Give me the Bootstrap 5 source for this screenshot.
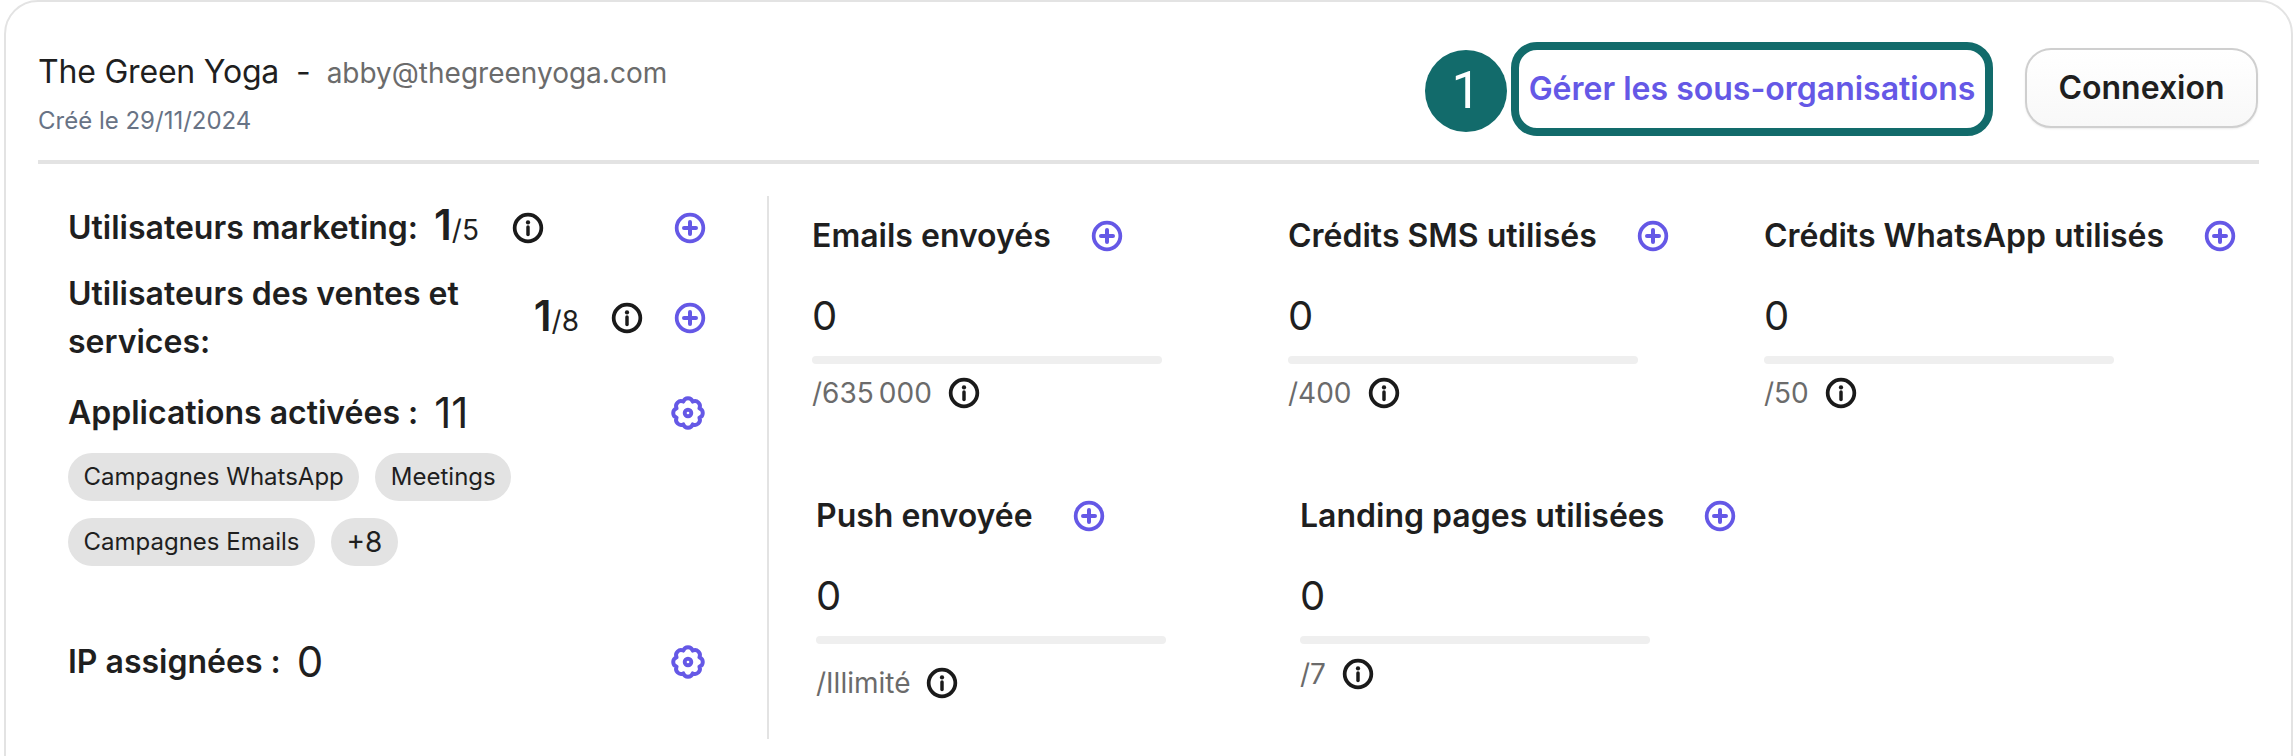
<!DOCTYPE html>
<html lang="fr">

<head>
    <meta charset="UTF-8">
    <meta name="viewport" content="width=device-width, initial-scale=1.0">
    <title>Sous-organisation</title>
    <link href="https://cdn.jsdelivr.net/npm/bootstrap@5.3.0/dist/css/bootstrap.min.css" rel="stylesheet">
    <style>
        html, body {
            height: 756px;
            overflow: hidden;
        }

        body {
            background: #fff;
            color: #1f1f1f;
            font-family: Inter, "Liberation Sans", sans-serif;
        }

        .org-card {
            height: 800px;
            margin: 0 3px 0 4px;
            padding: 0 32px 0 32px;
            border: 2px solid #e3e3e3;
            border-radius: 34px;
        }

        .org-head {
            height: 162px;
            padding-top: 40px;
            border-bottom: 4px solid #e3e3e3;
        }

        .org-name {
            margin-top: 7px;
            font-size: 32px;
            line-height: 45px;
            letter-spacing: -.2px;
        }

        .org-mail {
            margin-left: 16px;
            color: #6b6b6b;
            font-size: 28px;
            letter-spacing: 0;
        }

        .org-dash {
            margin-left: 17px;
        }

        .org-date {
            margin-top: 9px;
            color: #687385;
            font-size: 24px;
            line-height: 32px;
        }

        .step-dot {
            width: 82px;
            height: 82px;
            margin-top: 8px;
            margin-right: 4px;
            color: #fff;
            background: #126b6b;
            font-family: Roboto, "Liberation Sans", sans-serif;
            font-size: 52px;
        }

        .btn-sub {
            width: 482px;
            height: 94px;
            padding: 0;
            color: #6558e6;
            background: #fff;
            border: 8px solid #126b6b;
            border-radius: 26px;
            font-size: 32px;
            font-weight: 600;
            white-space: nowrap;
        }

        .btn-login {
            width: 233px;
            height: 80px;
            margin-top: 6px;
            margin-left: 32px;
            margin-right: 1px;
            padding: 0;
            color: #1f1f1f;
            background: linear-gradient(#fff, #f8f8f8);
            border: 2px solid #cfcfcf;
            border-radius: 26px;
            box-shadow: 0 1px 2px rgba(0, 0, 0, .08);
            font-size: 32px;
            font-weight: 600;
        }

        .org-body {
            padding-top: 32px;
        }

        .side-col {
            flex: 0 0 731px;
            height: 543px;
            padding: 5px 61px 0 30px;
            border-right: 2px solid #e3e3e3;
        }

        .side-row {
            min-height: 48px;
        }

        .apps-row {
            margin-top: 23px;
        }

        .label-txt {
            font-size: 32px;
            font-weight: 600;
            line-height: 48px;
        }

        .count-big {
            font-size: 42px;
            font-weight: 600;
            line-height: 48px;
        }

        .count-thin {
            font-size: 42px;
            line-height: 48px;
        }

        .count-of {
            font-size: 28px;
        }

        .info-far {
            margin-left: 33px;
        }

        .info-near {
            margin-left: 32px;
        }

        .plus-near {
            margin-left: 31px;
        }

        .chip-list {
            gap: 17px 16px;
            margin-top: 16px;
            width: 460px;
        }

        .chip-item {
            padding: 0 15.5px;
            color: #1f1f1f;
            background: #e3e3e3;
            font-size: 24px;
            font-weight: 400;
            line-height: 48px;
        }

        .chip-more {
            font-size: 28px;
        }

        .ip-row {
            margin-top: 72px;
        }

        .tile-list {
            padding: 20px 0 0 43px;
        }

        .tile-item {
            flex: 0 0 476px;
        }

        .tile-list-two {
            margin-top: 86px;
            margin-left: 4px;
        }

        .tile-list-two .tile-item {
            flex-basis: 484px;
        }

        .tile-title {
            gap: 40px;
            font-size: 32px;
            font-weight: 600;
            line-height: 40px;
            white-space: nowrap;
        }

        .tile-val {
            margin-top: 38px;
            font-size: 40px;
            line-height: 44px;
        }

        .tile-bar {
            width: 350px;
            height: 8px;
            margin-top: 18px;
            background: #efefef;
            border-radius: 4px;
        }

        .tile-limit {
            gap: 16px;
            margin-top: 12px;
            color: #6b6b6b;
            font-size: 28px;
            line-height: 34px;
        }

        .tile-list-two .tile-limit {
            margin-top: 13px;
        }

        .tile-list-two .tile-limit-low {
            margin-top: 22px;
        }

        .ico {
            flex: none;
            width: 32px;
            height: 32px;
        }

        .ico-gear {
            width: 36px;
            height: 36px;
        }

        .ico-dark {
            color: #1a1a1a;
        }

        .ico-brand {
            color: #6558e6;
        }
    </style>
</head>

<body>
    <svg width="0" height="0" class="d-block">
        <symbol id="i-info" viewBox="0 0 24 24">
            <circle cx="12" cy="12" r="10" fill="none" stroke="currentColor" stroke-width="2.8" />
            <circle cx="12" cy="7.8" r="1.6" fill="currentColor" />
            <path d="M12 11.2v5.6" stroke="currentColor" stroke-width="2.6" stroke-linecap="round" />
        </symbol>
        <symbol id="i-plus" viewBox="0 0 24 24">
            <circle cx="12" cy="12" r="10" fill="none" stroke="currentColor" stroke-width="2.8" />
            <path d="M12 7.5v9M7.5 12h9" stroke="currentColor" stroke-width="3" stroke-linecap="round" />
        </symbol>
        <symbol id="i-gear" viewBox="0 0 24 24">
            <path d="M19.58 8.86A3.3 3.3 0 0 1 19.58 15.14A3.3 3.3 0 0 1 15.14 19.58A3.3 3.3 0 0 1 8.86 19.58A3.3 3.3 0 0 1 4.42 15.14A3.3 3.3 0 0 1 4.42 8.86A3.3 3.3 0 0 1 8.86 4.42A3.3 3.3 0 0 1 15.14 4.42A3.3 3.3 0 0 1 19.58 8.86Z"
                fill="none" stroke="currentColor" stroke-width="2.6" stroke-linejoin="round" />
            <circle cx="12" cy="12" r="2.2" fill="none" stroke="currentColor" stroke-width="2.6" />
        </symbol>
    </svg>

    <div class="org-card bg-white">
        <div class="org-head d-flex justify-content-between">
            <div>
                <div class="org-name">The Green Yoga<span class="org-dash">-</span><span class="org-mail">abby@thegreenyoga.com</span></div>
                <div class="org-date">Créé le 29/11/2024</div>
            </div>
            <div class="d-flex align-items-start">
                <div class="step-dot rounded-circle d-flex align-items-center justify-content-center">1</div>
                <button class="btn btn-sub" type="button">Gérer les sous-organisations</button>
                <button class="btn btn-login" type="button">Connexion</button>
            </div>
        </div>

        <div class="org-body d-flex">
            <div class="side-col">
                <div class="side-row d-flex align-items-center">
                    <span class="label-txt">Utilisateurs marketing:</span>
                    <span class="count-big ms-3">1<span class="count-of fw-normal">/5</span></span>
                    <svg class="ico ico-dark info-far"><use href="#i-info" /></svg>
                    <svg class="ico ico-brand ms-auto"><use href="#i-plus" /></svg>
                </div>
                <div class="side-row d-flex align-items-center mt-3">
                    <span class="label-txt flex-grow-1">Utilisateurs des ventes et<br>services:</span>
                    <span class="count-big">1<span class="count-of fw-normal">/8</span></span>
                    <svg class="ico ico-dark info-near"><use href="#i-info" /></svg>
                    <svg class="ico ico-brand plus-near"><use href="#i-plus" /></svg>
                </div>
                <div class="side-row apps-row d-flex align-items-center">
                    <span class="label-txt">Applications activées :</span>
                    <span class="count-thin ms-3">11</span>
                    <svg class="ico ico-gear ico-brand ms-auto"><use href="#i-gear" /></svg>
                </div>
                <div class="chip-list d-flex flex-wrap">
                    <span class="chip-item rounded-pill">Campagnes WhatsApp</span>
                    <span class="chip-item rounded-pill">Meetings</span>
                    <span class="chip-item rounded-pill">Campagnes Emails</span>
                    <span class="chip-item chip-more rounded-pill">+8</span>
                </div>
                <div class="side-row ip-row d-flex align-items-center">
                    <span class="label-txt">IP assignées :</span>
                    <span class="count-thin ms-3">0</span>
                    <svg class="ico ico-gear ico-brand ms-auto"><use href="#i-gear" /></svg>
                </div>
            </div>

            <div class="flex-grow-1">
                <div class="tile-list d-flex">
                    <div class="tile-item">
                        <div class="tile-title d-flex align-items-center">Emails envoyés <svg class="ico ico-brand"><use href="#i-plus" /></svg></div>
                        <div class="tile-val">0</div>
                        <div class="tile-bar"></div>
                        <div class="tile-limit d-flex align-items-center"><span>/635&#8239;000</span><svg class="ico ico-dark"><use href="#i-info" /></svg></div>
                    </div>
                    <div class="tile-item">
                        <div class="tile-title d-flex align-items-center">Crédits SMS utilisés <svg class="ico ico-brand"><use href="#i-plus" /></svg></div>
                        <div class="tile-val">0</div>
                        <div class="tile-bar"></div>
                        <div class="tile-limit d-flex align-items-center"><span>/400</span><svg class="ico ico-dark"><use href="#i-info" /></svg></div>
                    </div>
                    <div class="tile-item">
                        <div class="tile-title d-flex align-items-center">Crédits WhatsApp utilisés <svg class="ico ico-brand"><use href="#i-plus" /></svg></div>
                        <div class="tile-val">0</div>
                        <div class="tile-bar"></div>
                        <div class="tile-limit d-flex align-items-center"><span>/50</span><svg class="ico ico-dark"><use href="#i-info" /></svg></div>
                    </div>
                </div>
                <div class="tile-list tile-list-two d-flex pt-0">
                    <div class="tile-item">
                        <div class="tile-title d-flex align-items-center">Push envoyée <svg class="ico ico-brand"><use href="#i-plus" /></svg></div>
                        <div class="tile-val">0</div>
                        <div class="tile-bar"></div>
                        <div class="tile-limit tile-limit-low d-flex align-items-center"><span>/Illimité</span><svg class="ico ico-dark"><use href="#i-info" /></svg></div>
                    </div>
                    <div class="tile-item">
                        <div class="tile-title d-flex align-items-center">Landing pages utilisées <svg class="ico ico-brand"><use href="#i-plus" /></svg></div>
                        <div class="tile-val">0</div>
                        <div class="tile-bar"></div>
                        <div class="tile-limit d-flex align-items-center"><span>/7</span><svg class="ico ico-dark"><use href="#i-info" /></svg></div>
                    </div>
                </div>
            </div>
        </div>
    </div>

    <script src="https://cdn.jsdelivr.net/npm/bootstrap@5.3.0/dist/js/bootstrap.bundle.min.js"></script>
</body>

</html>
